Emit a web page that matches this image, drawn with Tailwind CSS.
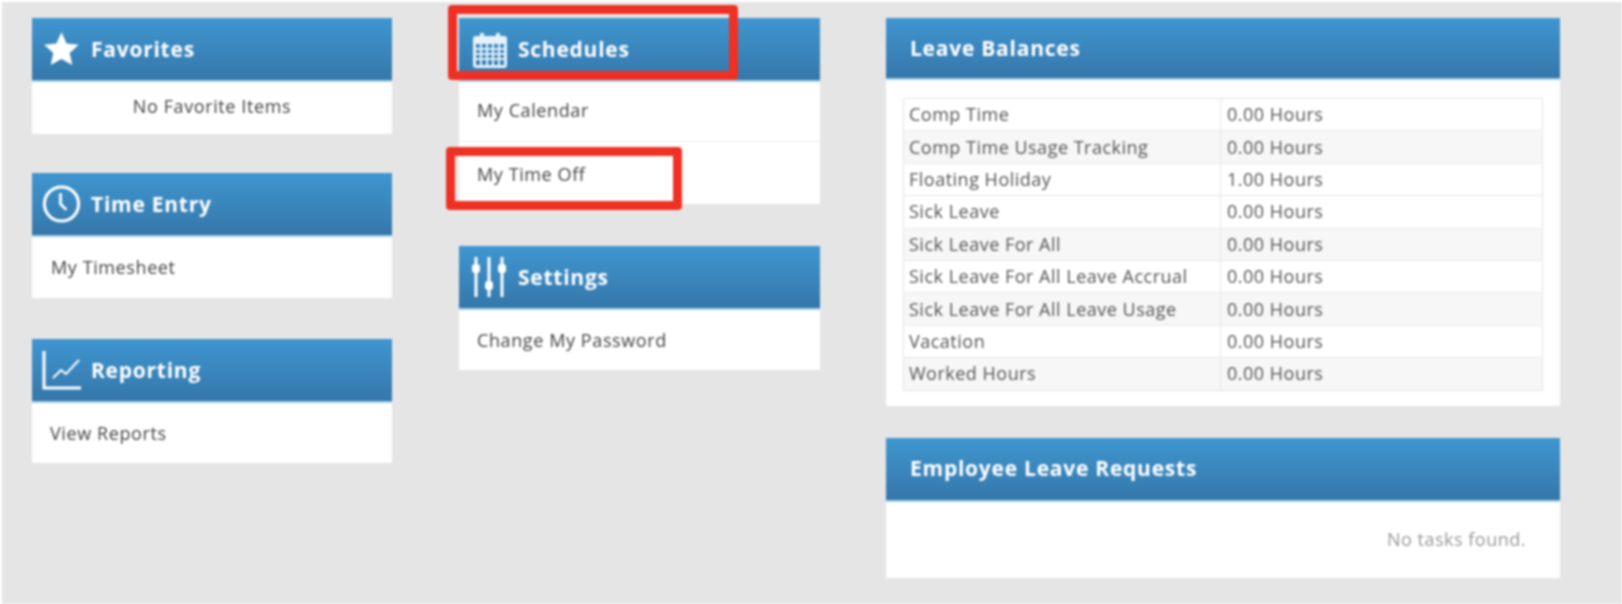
<!DOCTYPE html>
<html>
<head>
<meta charset="utf-8">
<script src="https://cdn.jsdelivr.net/npm/@tailwindcss/browser@4"></script>
</head>
<body class="bg-white overflow-hidden">
<div class="relative w-[1622px] h-[604px] overflow-hidden font-['Open_Sans',sans-serif] blur-[1.3px]">
  <div class="absolute left-[2px] top-[2px] right-0 bottom-0 bg-[#e5e5e5]"></div>
  <main class="relative flex items-start pl-[32px] pt-[18px] gap-[66px]">
    <div class="w-[360px] flex flex-col gap-[39px]">
      <section class="bg-white">
        <header class="h-[64px] flex items-center gap-[11px] pl-[11px] text-white font-bold tracking-[0.75px] text-[21px] bg-gradient-to-b from-[#4096d1] to-[#3577aa] border-b-2 border-[#a5cfe8]">
          <svg class="w-[37px] h-[36px]" viewBox="0 0 24 24" fill="#fff"><path d="M12 .8l3.4 7.5 8.1.9-6 5.5 1.7 8-7.2-4.1-7.2 4.1 1.7-8-6-5.5 8.1-.9z"/></svg>
          <span class="pt-[2px]">Favorites</span>
        </header>
        <div class="h-[52px] flex items-center justify-center text-[18px] tracking-[0.6px] text-[#444] pb-[3px]">No Favorite Items</div>
      </section>
      <section class="bg-white">
        <header class="h-[64px] flex items-center gap-[10px] pl-[10px] text-white font-bold tracking-[0.75px] text-[21px] bg-gradient-to-b from-[#4096d1] to-[#3577aa] border-b-2 border-[#a5cfe8]">
          <svg class="w-[39px] h-[40px]" viewBox="0 0 40 40" fill="none" stroke="#fff" stroke-width="3.2"><circle cx="20" cy="20" r="17.5"/><path d="M19 9v11l6 6" stroke-width="2.8"/></svg>
          <span class="pt-[2px]">Time Entry</span>
        </header>
        <div class="h-[61px] flex items-center pl-[19px] text-[18px] tracking-[0.6px] text-[#444]">My Timesheet</div>
      </section>
      <section class="bg-white mt-[2px]">
        <header class="h-[64px] flex items-center gap-[10px] pl-[10px] text-white font-bold tracking-[0.75px] text-[21px] bg-gradient-to-b from-[#4096d1] to-[#3577aa] border-b-2 border-[#a5cfe8]">
          <svg class="w-[39px] h-[40px]" viewBox="0 0 39 40" fill="none" stroke="#fff"><path d="M2 1v37h37" stroke-width="3"/><path d="M11 28l8-8 5 4 13-14" stroke-width="2"/></svg>
          <span class="pt-[2px]">Reporting</span>
        </header>
        <div class="h-[60px] flex items-center pl-[18px] text-[18px] tracking-[0.6px] text-[#444] pt-[1px]">View Reports</div>
      </section>
    </div>
    <div class="w-[361px] ml-[1px] flex flex-col gap-[42px]">
      <section class="bg-white">
        <header class="h-[64px] flex items-center gap-[11px] pl-[14px] text-white font-bold tracking-[0.75px] text-[21px] bg-gradient-to-b from-[#4096d1] to-[#3577aa] border-b-2 border-[#a5cfe8]">
          <svg class="w-[34px] h-[37px]" viewBox="0 0 34 37"><path fill="#e6f2f9" fill-rule="evenodd" d="M3 5h4V2h4v3h12V2h4v3h4a3 3 0 0 1 3 3v26a3 3 0 0 1-3 3H3a3 3 0 0 1-3-3V8a3 3 0 0 1 3-3zM3 13v21h28V13z"/><path stroke="#e6f2f9" stroke-width="2" d="M3 18h28M3 23h28M3 28h28M8 13v21M14 13v21M20 13v21M26 13v21"/></svg>
          <span class="pt-[2px]">Schedules</span>
        </header>
        <div class="h-[60px] flex items-center pl-[18px] text-[18px] tracking-[0.6px] text-[#444] border-b border-[#eee] pb-[3px]">My Calendar</div>
        <div class="h-[62px] flex items-center pl-[18px] text-[18px] tracking-[0.6px] text-[#444] pt-[2px]">My Time Off</div>
      </section>
      <section class="bg-white">
        <header class="h-[64px] flex items-center gap-[11px] pl-[12px] text-white font-bold tracking-[0.75px] text-[21px] bg-gradient-to-b from-[#4096d1] to-[#3577aa] border-b-2 border-[#a5cfe8]">
          <svg class="w-[36px] h-[40px]" viewBox="0 0 36 40"><g stroke="#fff" stroke-width="3"><path d="M5 0v40M18 0v40M31 0v40"/></g><g fill="#fff"><rect x="1" y="7" width="8" height="9" rx="3"/><rect x="14" y="24" width="8" height="9" rx="3"/><rect x="27" y="7" width="8" height="9" rx="3"/></g></svg>
          <span class="pt-[2px]">Settings</span>
        </header>
        <div class="h-[60px] flex items-center pl-[18px] text-[18px] tracking-[0.6px] text-[#444]">Change My Password</div>
      </section>
    </div>
    <div class="w-[674px] flex flex-col gap-[32px]">
      <section class="bg-white">
        <header class="h-[62px] flex items-center pl-[24px] pt-[2px] text-white font-bold tracking-[0.75px] text-[21px] bg-gradient-to-b from-[#4096d1] to-[#3577aa] border-b-2 border-[#a5cfe8]">Leave Balances</header>
        <div class="px-[17px] pt-[18px] pb-[15px]">
          <table class="w-[640px] table-fixed border-collapse border border-[#e4e4e4] text-[18px] tracking-[0.5px] text-[#555]">
            <colgroup><col class="w-[317px]"><col></colgroup>
            <tbody>
              <tr class="h-[32.4px] border-b border-[#e8e8e8]"><td class="pl-[5px] border-r border-[#e8e8e8]">Comp Time</td><td class="pl-[6px]">0.00 Hours</td></tr>
              <tr class="h-[32.4px] border-b border-[#e8e8e8] bg-[#f7f7f7]"><td class="pl-[5px] border-r border-[#e8e8e8]">Comp Time Usage Tracking</td><td class="pl-[6px]">0.00 Hours</td></tr>
              <tr class="h-[32.4px] border-b border-[#e8e8e8]"><td class="pl-[5px] border-r border-[#e8e8e8]">Floating Holiday</td><td class="pl-[6px]">1.00 Hours</td></tr>
              <tr class="h-[32.4px] border-b border-[#e8e8e8]"><td class="pl-[5px] border-r border-[#e8e8e8]">Sick Leave</td><td class="pl-[6px]">0.00 Hours</td></tr>
              <tr class="h-[32.4px] border-b border-[#e8e8e8] bg-[#f7f7f7]"><td class="pl-[5px] border-r border-[#e8e8e8]">Sick Leave For All</td><td class="pl-[6px]">0.00 Hours</td></tr>
              <tr class="h-[32.4px] border-b border-[#e8e8e8]"><td class="pl-[5px] border-r border-[#e8e8e8]">Sick Leave For All Leave Accrual</td><td class="pl-[6px]">0.00 Hours</td></tr>
              <tr class="h-[32.4px] border-b border-[#e8e8e8] bg-[#f7f7f7]"><td class="pl-[5px] border-r border-[#e8e8e8]">Sick Leave For All Leave Usage</td><td class="pl-[6px]">0.00 Hours</td></tr>
              <tr class="h-[32.4px] border-b border-[#e8e8e8]"><td class="pl-[5px] border-r border-[#e8e8e8]">Vacation</td><td class="pl-[6px]">0.00 Hours</td></tr>
              <tr class="h-[32.4px] bg-[#f7f7f7]"><td class="pl-[5px] border-r border-[#e8e8e8]">Worked Hours</td><td class="pl-[6px]">0.00 Hours</td></tr>
            </tbody>
          </table>
        </div>
      </section>
      <section class="bg-white">
        <header class="h-[64px] flex items-center pl-[24px] text-white font-bold tracking-[0.75px] text-[21px] bg-gradient-to-b from-[#4096d1] to-[#3577aa] border-b-2 border-[#a5cfe8]">Employee Leave Requests</header>
        <div class="h-[76px] flex items-center justify-end pr-[34px] text-[18px] tracking-[0.5px] text-[#999]">No tasks found.</div>
      </section>
    </div>
  </main>
  <div class="absolute left-[448px] top-[5px] w-[290px] h-[75px] border-[9px] border-[#ee3124] rounded-[4px]"></div>
  <div class="absolute left-[446px] top-[147px] w-[236px] h-[63px] border-[9px] border-[#ee3124] rounded-[4px]"></div>
</div>
</body>
</html>
